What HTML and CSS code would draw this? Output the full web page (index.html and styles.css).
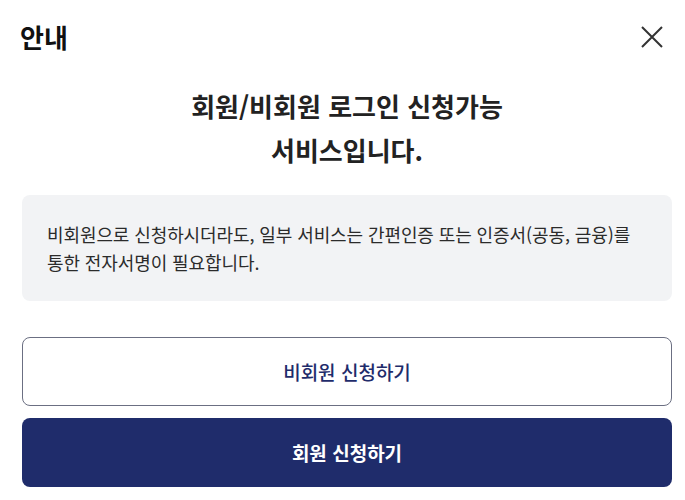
FILE: index.html
```html
<!DOCTYPE html>
<html lang="ko">
<head>
    <meta charset="UTF-8">
    <meta name="viewport" content="width=device-width, initial-scale=1.0">
    <title>안내</title>
    <link rel="stylesheet" href="styles.css">
</head>
<body>
    <div class="modal">
        <!-- 상단 제목 -->
        <div class="modal-header">
            <h2 class="modal-title">안내</h2>
            <button class="close-btn" aria-label="닫기">
                <svg width="22" height="22" viewBox="0 0 22 22">
                    <path d="M1 1 L21 21 M21 1 L1 21" stroke="#333" stroke-width="2" fill="none"/>
                </svg>
            </button>
        </div>

        <div class="modal-body">
            <p class="headline">회원/비회원 로그인 신청가능<br>서비스입니다.</p>

            <div class="notice">
                비회원으로 신청하시더라도, 일부 서비스는 간편인증 또는 인증서(공동, 금융)를<br>
                통한 전자서명이 필요합니다.
            </div>

            <div class="actions">
                <button class="btn btn-outline">비회원 신청하기</button>
                <button class="btn btn-primary">회원 신청하기</button>
            </div>
        </div>
    </div>
</body>
</html>
```

FILE: styles.css
```css
/* 기본 */
body {
    margin: 0;
    font-family: "Noto Sans CJK KR", "Noto Sans", sans-serif;
    background-color: #ffffff;
    color: #222;
}

/* 모달 */
.modal {
    width: 685px;
    box-sizing: border-box;
}

.modal-header {
    display: flex;
    justify-content: space-between;
    align-items: center;
    padding: 20px 22px 0 20px;
}

.modal-title {
    margin: 0;
    font-size: 26px;
    line-height: 34px;
    font-weight: 700;
    color: #111;
}

.close-btn {
    background: none;
    border: none;
    padding: 0;
    width: 22px;
    height: 22px;
    cursor: pointer;
}

.modal-body {
    padding: 0 13px 0 22px;
}

/* 안내 문구 */
.headline {
    margin: 30px 0 23px;
    text-align: center;
    font-size: 26px;
    line-height: 44px;
    font-weight: 700;
    color: #222;
}

.notice {
    background-color: #f2f3f5;
    border-radius: 8px;
    padding: 25px 25px 25px;
    font-size: 18px;
    line-height: 28px;
    color: #2b2b2b;
    letter-spacing: -0.1px;
}

/* 버튼 */
.actions {
    display: flex;
    flex-direction: column;
    gap: 12px;
    margin-top: 36px;
}

.btn {
    height: 69px;
    border-radius: 8px;
    font-family: inherit;
    font-size: 19px;
    font-weight: 500;
    cursor: pointer;
}

.btn-outline {
    background-color: #ffffff;
    border: 1px solid #6b6f82;
    color: #1f2c6b;
}

.btn-primary {
    background-color: #1f2c6b;
    border: none;
    color: #ffffff;
    font-weight: 700;
}
```
